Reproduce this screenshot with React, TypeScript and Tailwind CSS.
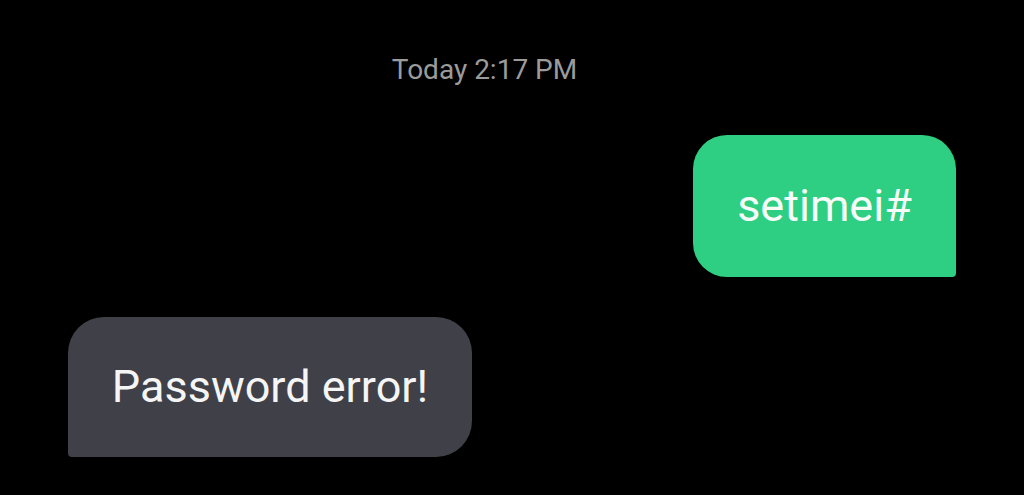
import React from 'react';

const App = () => {
  return (
    <div className="w-[1024px] h-[495px] bg-black overflow-hidden font-['Roboto',sans-serif]">
      <div className="flex flex-col px-[68px] pt-[52px]">
        <div className="pr-[55px] text-center text-[28px] leading-[36px] text-[#9b9b9b]">
          Today 2:17 PM
        </div>

        <div className="mt-[47px] flex justify-end">
          <div className="flex h-[142px] w-[263px] items-center justify-center rounded-[34px] rounded-br-[4px] bg-[#2ecf82] text-[45px] text-[#f7fcf9]">
            setimei#
          </div>
        </div>

        <div className="mt-[40px] flex justify-start">
          <div className="flex h-[140px] w-[404px] items-center justify-center rounded-[36px] rounded-bl-[4px] bg-[#404148] text-[45px] text-[#f5f5f5]">
            Password error!
          </div>
        </div>
      </div>
    </div>
  );
};

export default App;
